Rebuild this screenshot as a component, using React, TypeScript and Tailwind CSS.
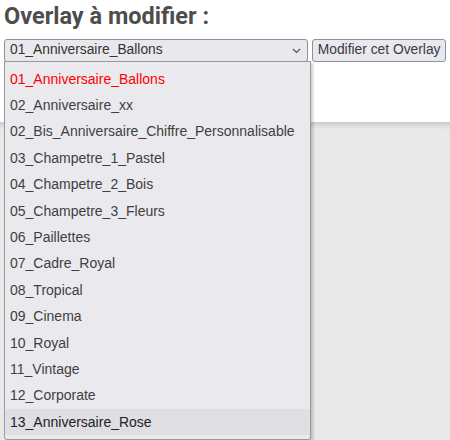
import React from "react";

const items = [
  "01_Anniversaire_Ballons",
  "02_Anniversaire_xx",
  "02_Bis_Anniversaire_Chiffre_Personnalisable",
  "03_Champetre_1_Pastel",
  "04_Champetre_2_Bois",
  "05_Champetre_3_Fleurs",
  "06_Paillettes",
  "07_Cadre_Royal",
  "08_Tropical",
  "09_Cinema",
  "10_Royal",
  "11_Vintage",
  "12_Corporate",
  "13_Anniversaire_Rose",
];

export default function App() {
  return (
    <div className="relative w-[450px] h-[440px] overflow-hidden bg-white" style={{ fontFamily: '"Liberation Sans", Arial, sans-serif' }}>
      <div className="h-[122px] bg-white px-[4px]">
        <h1 className="pt-[1px] text-[23.5px] leading-[30px] font-bold text-[#4d4d4d]" style={{ fontFamily: 'Roboto, "Liberation Sans", sans-serif' }}>
          Overlay à modifier :
        </h1>
        <div className="mt-[8px] flex items-center gap-[4px]">
          <div className="flex h-[23px] w-[307px] items-center justify-between rounded-[3px] border border-[#8f8f9d] bg-[#e9e9ed] pl-[5px] pr-[6px] text-[13.8px] text-[#333]">
            <span>01_Anniversaire_Ballons</span>
            <svg width="9" height="6" viewBox="0 0 9 6" className="mt-[1px]">
              <path d="M1 1l3.5 3.5L8 1" fill="none" stroke="#555" strokeWidth="1.2" />
            </svg>
          </div>
          <div className="flex h-[23px] w-[135px] items-center justify-center rounded-[3px] border border-[#8f8f9d] bg-[#e9e9ed] text-[13.8px] text-[#3a3a44]">
            Modifier cet Overlay
          </div>
        </div>
      </div>
      <div className="h-[318px] bg-[#e9e9e9] shadow-[inset_0_7px_6px_-5px_rgba(0,0,0,0.18)]" />
      <div className="absolute left-[4px] top-[61px] w-[307px] rounded-b-[3px] border border-[#9a9a9a] bg-[#e9e9ee] pt-[4px] pb-[4px] shadow-[2px_2px_3px_rgba(0,0,0,0.2)]">
        {items.map((t, i) => (
          <div
            key={t}
            className={
              "flex h-[26.4px] items-center pl-[5px] text-[14px] " +
              (i === 0 ? "text-[#ff0000]" : "text-[#3f3f3f]") +
              (i === items.length - 1 ? " bg-[#dedee3] text-[#222]" : "")
            }
          >
            {t}
          </div>
        ))}
      </div>
    </div>
  );
}
